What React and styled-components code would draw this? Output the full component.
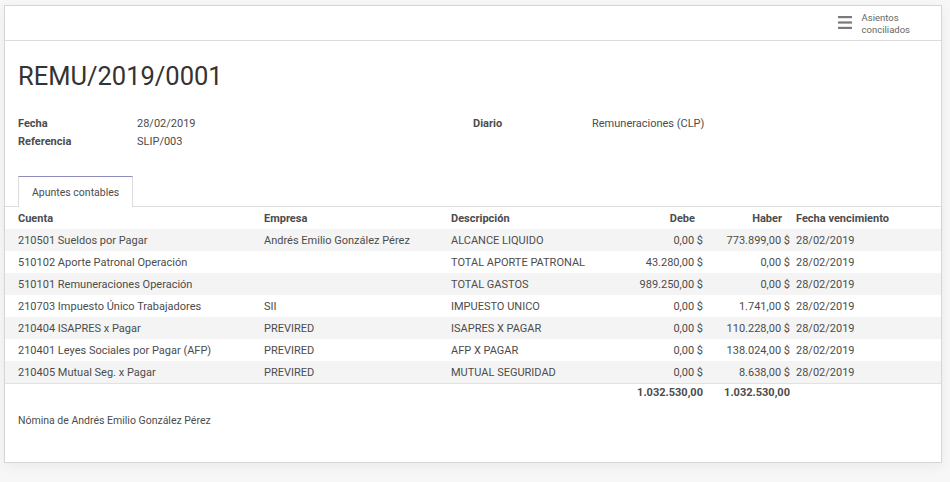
import React from 'react';
import styled, { createGlobalStyle } from 'styled-components';

const GlobalStyle = createGlobalStyle`
  html, body {
    margin: 0;
    padding: 0;
    background: #f7f7f7;
    font-family: Roboto, "Liberation Sans", sans-serif;
    color: #4c4c4c;
  }
`;

const Page = styled.div`
  padding: 5px 8px 20px 4px;
`;

const Sheet = styled.div`
  background: #fff;
  border: 1px solid #d6d6d6;
  box-shadow: 0 3px 12px rgba(0, 0, 0, 0.06);
  box-sizing: border-box;
  height: 458px;
`;

const ButtonBox = styled.div`
  display: flex;
  justify-content: flex-end;
  height: 34px;
  border-bottom: 1px solid #dcdcdc;
  padding-right: 31px;
`;

const StatButton = styled.div`
  display: flex;
  align-items: flex-start;
  gap: 10px;
  padding-top: 6px;
  color: #666;
  svg {
    margin-top: 4px;
  }
`;

const StatText = styled.div`
  font-size: 9.5px;
  line-height: 12px;
`;

const Body = styled.div`
  padding: 19px 0 0;
`;

const Title = styled.h1`
  margin: 0 0 0 13px;
  font-size: 25.5px;
  font-weight: 400;
  line-height: 32px;
  color: #333;
`;

const InfoGrid = styled.div`
  display: grid;
  grid-template-columns: 455px 1fr;
  padding: 23px 0 0 13px;
`;

const InfoRow = styled.div`
  display: grid;
  grid-template-columns: 119px 1fr;
  font-size: 11px;
  line-height: 18px;
`;

const Label = styled.span`
  font-weight: 700;
`;

const Tabs = styled.div`
  display: flex;
  margin-top: 25px;
  padding-left: 13px;
  border-bottom: 1px solid #dcdcdc;
`;

const Tab = styled.div`
  padding: 0 13px;
  height: 31px;
  line-height: 31px;
  font-size: 10.5px;
  background: #fff;
  border: 1px solid #dcdcdc;
  border-top: 1px solid #8f8dbd;
  border-bottom: none;
  margin-bottom: -1px;
  box-sizing: border-box;
`;

const Table = styled.table`
  width: 100%;
  border-collapse: collapse;
  table-layout: fixed;
  font-size: 11px;
`;

const Th = styled.th`
  font-weight: 700;
  height: 22px;
  padding: 0 ${p => (p.$num ? '11px' : '3px')} 0 ${p => (p.$first ? '13px' : '3px')};
  text-align: ${p => (p.$num ? 'right' : 'left')};
  white-space: nowrap;
`;

const HeadRow = styled.tr`
  box-shadow: 0 2px 3px rgba(0, 0, 0, 0.05);
`;

const Row = styled.tr`
  background: ${p => (p.$striped ? '#f4f4f4' : '#fff')};
`;

const Td = styled.td`
  height: 22px;
  padding: 0 3px 0 ${p => (p.$first ? '13px' : '3px')};
  text-align: ${p => (p.$num ? 'right' : 'left')};
  white-space: nowrap;
  overflow: hidden;
`;

const FootRow = styled.tr`
  border-top: 1px solid #e2e2e2;
`;

const FootCell = styled.td`
  height: 18px;
  padding: 0 3px;
  text-align: right;
  font-weight: 700;
  vertical-align: top;
  line-height: 17px;
`;

const Note = styled.p`
  margin: 12px 0 0 13px;
  font-size: 10.5px;
`;

const HamburgerIcon = () => (
  <svg width="14" height="13" viewBox="0 0 14 13">
    <rect x="0" y="0" width="14" height="2.2" fill="#7a7a7a" />
    <rect x="0" y="5.4" width="14" height="2.2" fill="#7a7a7a" />
    <rect x="0" y="10.8" width="14" height="2.2" fill="#7a7a7a" />
  </svg>
);

const lines = [
  ['210501 Sueldos por Pagar', 'Andrés Emilio González Pérez', 'ALCANCE LIQUIDO', '0,00 $', '773.899,00 $'],
  ['510102 Aporte Patronal Operación', '', 'TOTAL APORTE PATRONAL', '43.280,00 $', '0,00 $'],
  ['510101 Remuneraciones Operación', '', 'TOTAL GASTOS', '989.250,00 $', '0,00 $'],
  ['210703 Impuesto Único Trabajadores', 'SII', 'IMPUESTO UNICO', '0,00 $', '1.741,00 $'],
  ['210404 ISAPRES x Pagar', 'PREVIRED', 'ISAPRES X PAGAR', '0,00 $', '110.228,00 $'],
  ['210401 Leyes Sociales por Pagar (AFP)', 'PREVIRED', 'AFP X PAGAR', '0,00 $', '138.024,00 $'],
  ['210405 Mutual Seg. x Pagar', 'PREVIRED', 'MUTUAL SEGURIDAD', '0,00 $', '8.638,00 $'],
];

const App = () => (
  <Page>
    <GlobalStyle />
    <Sheet>
      <ButtonBox>
        <StatButton>
          <HamburgerIcon />
          <StatText>Asientos<br />conciliados</StatText>
        </StatButton>
      </ButtonBox>
      <Body>
        <Title>REMU/2019/0001</Title>
        <InfoGrid>
          <div>
            <InfoRow><Label>Fecha</Label><span>28/02/2019</span></InfoRow>
            <InfoRow><Label>Referencia</Label><span>SLIP/003</span></InfoRow>
          </div>
          <div>
            <InfoRow><Label>Diario</Label><span>Remuneraciones (CLP)</span></InfoRow>
          </div>
        </InfoGrid>
        <Tabs>
          <Tab>Apuntes contables</Tab>
        </Tabs>
        <Table>
          <colgroup>
            <col style={{ width: 256 }} />
            <col style={{ width: 187 }} />
            <col style={{ width: 160 }} />
            <col style={{ width: 98 }} />
            <col style={{ width: 87 }} />
            <col />
          </colgroup>
          <thead>
            <HeadRow>
              <Th $first>Cuenta</Th>
              <Th>Empresa</Th>
              <Th>Descripción</Th>
              <Th $num>Debe</Th>
              <Th $num>Haber</Th>
              <Th>Fecha vencimiento</Th>
            </HeadRow>
          </thead>
          <tbody>
            {lines.map((l, i) => (
              <Row key={l[0]} $striped={i % 2 === 0}>
                <Td $first>{l[0]}</Td>
                <Td>{l[1]}</Td>
                <Td>{l[2]}</Td>
                <Td $num>{l[3]}</Td>
                <Td $num>{l[4]}</Td>
                <Td>28/02/2019</Td>
              </Row>
            ))}
          </tbody>
          <tfoot>
            <FootRow>
              <td />
              <td />
              <td />
              <FootCell>1.032.530,00</FootCell>
              <FootCell>1.032.530,00</FootCell>
              <td />
            </FootRow>
          </tfoot>
        </Table>
        <Note>Nómina de Andrés Emilio González Pérez</Note>
      </Body>
    </Sheet>
  </Page>
);

export default App;
